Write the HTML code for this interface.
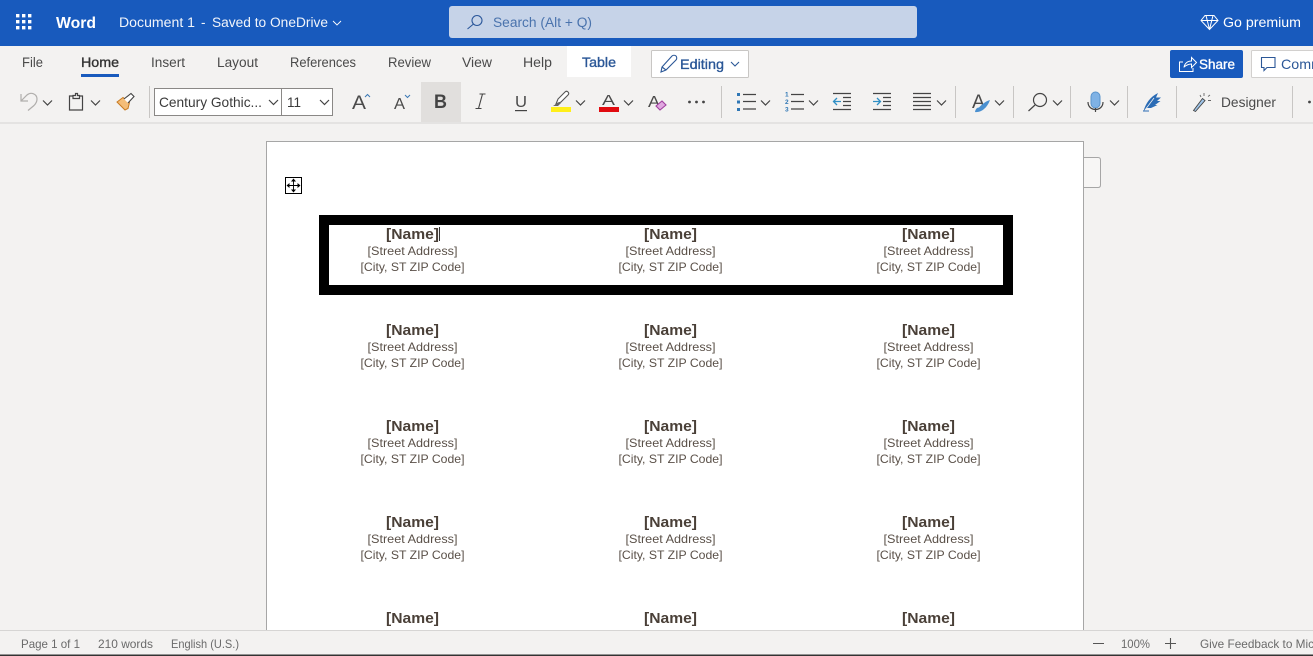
<!DOCTYPE html>
<html><head><meta charset="utf-8"><title>Word</title>
<style>
html,body{margin:0;padding:0;width:1313px;height:656px;overflow:hidden;background:#f3f2f1}
svg{display:block;font-family:"Liberation Sans",sans-serif}
.r{font-size:13.5px;fill:#4a4a4a}
.ch{fill:none;stroke:#444;stroke-width:1.2}
.ic{fill:none;stroke:#444;stroke-width:1.2}
.n{font-size:14.5px;font-weight:bold;fill:#4a4038;text-anchor:middle}
.s{font-size:12px;fill:#5a5048;text-anchor:middle}
.st{font-size:12px;fill:#6a6a6a}
.sb{stroke-width:.35px}
</style></head><body>
<svg width="1313" height="656" viewBox="0 0 1313 656" xmlns="http://www.w3.org/2000/svg">
<defs>
<path id="cv" d="M0 .5l4.500 4.500 4.500-4.500" class="ch"/>
<g id="lab">
<text class="n" x="0" y="0" textLength="53" lengthAdjust="spacingAndGlyphs">[Name]</text>
<text class="s" x="0" y="16" textLength="90" lengthAdjust="spacingAndGlyphs">[Street Address]</text>
<text class="s" x="0" y="32" textLength="104" lengthAdjust="spacingAndGlyphs">[City, ST ZIP Code]</text>
</g>
<g id="row"><use href="#lab" x="412.500"/><use href="#lab" x="670.500"/><use href="#lab" x="928.500"/></g>
</defs>
<rect width="1313" height="656" fill="#f3f2f1"/>

<!-- title bar -->
<rect width="1313" height="46" fill="#185abd"/>
<g fill="#fff"><rect x="16" y="14" width="3.400" height="3.400"/><rect x="22" y="14" width="3.400" height="3.400"/><rect x="28" y="14" width="3.400" height="3.400"/><rect x="16" y="20" width="3.400" height="3.400"/><rect x="22" y="20" width="3.400" height="3.400"/><rect x="28" y="20" width="3.400" height="3.400"/><rect x="16" y="26" width="3.400" height="3.400"/><rect x="22" y="26" width="3.400" height="3.400"/><rect x="28" y="26" width="3.400" height="3.400"/></g>
<text x="56" y="28" font-size="15.500" font-weight="bold" fill="#fff" textLength="40" lengthAdjust="spacingAndGlyphs">Word</text>
<text x="119" y="27" font-size="13.500" fill="#f2f5fb" textLength="76" lengthAdjust="spacingAndGlyphs">Document 1</text>
<text x="201" y="27" font-size="13.500" fill="#f2f5fb">-</text>
<text x="212" y="27" font-size="13.500" fill="#f2f5fb" textLength="116" lengthAdjust="spacingAndGlyphs">Saved to OneDrive</text>
<path d="M333 21l4 4 4-4" fill="none" stroke="#fff" stroke-width=".9"/>
<rect x="449" y="6" width="468" height="32" rx="3" fill="#c6d3e8"/>
<circle cx="477" cy="20.500" r="5" fill="none" stroke="#2b579a" stroke-width="1.100"/><path d="M473.500 24L467.500 29" stroke="#2b579a" stroke-width="1.100"/>
<text x="493" y="27" font-size="13.500" fill="#4a73ad" textLength="99" lengthAdjust="spacingAndGlyphs">Search (Alt + Q)</text>
<path d="M1201 20.500l4-5h9l4 5-8.500 9zM1201 20.500h17M1206 15.500l3.500 14 3.500-14" fill="none" stroke="#fff" stroke-width="1"/>
<text x="1223" y="27" font-size="13.500" fill="#fff" textLength="78" lengthAdjust="spacingAndGlyphs">Go premium</text>

<!-- tabs -->
<text class="r" x="22" y="67" textLength="21" lengthAdjust="spacingAndGlyphs">File</text>
<text class="sb" x="81" y="67" font-size="13.500" fill="#333" stroke="#333" textLength="38" lengthAdjust="spacingAndGlyphs">Home</text>
<rect x="81" y="74" width="38" height="3" fill="#185abd"/>
<text class="r" x="151" y="67" textLength="34" lengthAdjust="spacingAndGlyphs">Insert</text>
<text class="r" x="217" y="67" textLength="41" lengthAdjust="spacingAndGlyphs">Layout</text>
<text class="r" x="290" y="67" textLength="66" lengthAdjust="spacingAndGlyphs">References</text>
<text class="r" x="388" y="67" textLength="43" lengthAdjust="spacingAndGlyphs">Review</text>
<text class="r" x="462" y="67" textLength="30" lengthAdjust="spacingAndGlyphs">View</text>
<text class="r" x="523" y="67" textLength="29" lengthAdjust="spacingAndGlyphs">Help</text>
<rect x="567" y="46" width="64" height="31" fill="#fff"/>
<text class="sb" x="582" y="67" font-size="13.500" fill="#2b5797" stroke="#2b5797" textLength="34" lengthAdjust="spacingAndGlyphs">Table</text>
<rect x="651.500" y="50.500" width="97" height="27" rx="1" fill="#fff" stroke="#c8c6c4"/>
<path d="M661 72l1-5 10-11c1-1 3-1 4 0s1 3 0 4l-10 10zM662 67l4 3" fill="none" stroke="#2b5797" stroke-width="1.100"/>
<text class="sb" x="680" y="69" font-size="14" fill="#2b5797" stroke="#2b5797" textLength="44" lengthAdjust="spacingAndGlyphs">Editing</text>
<path d="M731 62l4 4 4-4" fill="none" stroke="#2b5797" stroke-width="1.100"/>
<rect x="1170" y="50" width="73" height="28" rx="2" fill="#185abd"/>
<path d="M1183 62h-3.500v9.500h13.500v-3.500M1184 67.500c.5-4 3.500-6.500 7.500-6.500v-3.500l5 5-5 5v-3.500c-3 0-5 1-7.500 3" fill="none" stroke="#fff" stroke-width="1"/>
<text class="sb" x="1199" y="69" font-size="14" fill="#fff" stroke="#fff" textLength="36" lengthAdjust="spacingAndGlyphs">Share</text>
<rect x="1251.500" y="50.500" width="70" height="27" rx="1" fill="#fff" stroke="#d2d0ce"/>
<path d="M1261.500 57.500h13.500v10h-8l-3 3v-3h-2.500z" fill="none" stroke="#2b5797" stroke-width="1.100"/>
<text x="1281" y="69" font-size="14" fill="#2b5797" textLength="42" lengthAdjust="spacingAndGlyphs">Comm</text>

<!-- toolbar -->
<rect x="0" y="122" width="1313" height="2" fill="#e4e3e2"/>
<path d="M21 94v7h7M21 101l6-6c4-3.500 10-1 10 4 0 3-1.500 5-3 6.500l-6 5" fill="none" stroke="#b0aeac" stroke-width="1.200"/>
<use href="#cv" x="43" y="100"/>
<path d="M73 96h-3.500v14h13v-14h-3.500M73 98.500v-3h2.500v-2h2v2h2v3z" class="ic"/>
<use href="#cv" x="91" y="100"/>
<path d="M117 102l8 8 3-1.500 1.500-6-6.500-5z" fill="#f4bd78" stroke="#c87a20" stroke-width="1"/>
<path d="M124 99l7-5.500 3 3-6 6.500" fill="#fff" stroke="#444" stroke-width="1.100"/>
<line x1="149.500" y1="86" x2="149.500" y2="118" stroke="#c8c6c4"/>
<rect x="154.500" y="88.500" width="178" height="27" fill="#fff" stroke="#8a8886"/>
<line x1="281.500" y1="88" x2="281.500" y2="116" stroke="#8a8886"/>
<text x="159" y="107" font-size="14" fill="#3a3a3a" textLength="103" lengthAdjust="spacingAndGlyphs">Century Gothic...</text>
<use href="#cv" x="269" y="99.500"/>
<text x="287" y="107" font-size="14" fill="#3a3a3a" textLength="14" lengthAdjust="spacingAndGlyphs">11</text>
<use href="#cv" x="320" y="99.500"/>
<text x="352" y="109" font-size="19" fill="#4a4a4a" textLength="14" lengthAdjust="spacingAndGlyphs">A</text>
<path d="M365 97l2.500-2.500 2.500 2.500" fill="none" stroke="#3a78b5" stroke-width="1"/>
<text x="394" y="109" font-size="16" fill="#4a4a4a" textLength="11" lengthAdjust="spacingAndGlyphs">A</text>
<path d="M405 95l2.500 2.500 2.500-2.500" fill="none" stroke="#3a78b5" stroke-width="1"/>
<rect x="421" y="82" width="40" height="40" fill="#e1dfdd"/>
<text x="434" y="108" font-size="19" font-weight="bold" fill="#444" textLength="13" lengthAdjust="spacingAndGlyphs">B</text>
<path d="M478.500 108.500l4-14.500M475.500 108.500h6M479.500 94h6" fill="none" stroke="#444" stroke-width="1.100"/>
<text x="515" y="107" font-size="16" fill="#4a4a4a" textLength="12" lengthAdjust="spacingAndGlyphs">U</text>
<rect x="515" y="110" width="12" height="1.200" fill="#444"/>
<path d="M556 104l2-5 7-7c1-1 2-1 3 0s1 2 0 3l-7 7z" fill="#fff" stroke="#555" stroke-width="1.100"/>
<path d="M553 106l3-2 3-2 2 1-3 3z" fill="#666"/>
<rect x="551" y="107" width="20" height="5" fill="#ffef1a"/>
<use href="#cv" x="576" y="100"/>
<text x="602" y="105" font-size="15" fill="#4a4a4a" textLength="13" lengthAdjust="spacingAndGlyphs">A</text>
<rect x="599" y="107" width="20" height="5" fill="#e10b10"/>
<use href="#cv" x="624" y="100"/>
<text x="648" y="107" font-size="16" fill="#4a4a4a" textLength="12" lengthAdjust="spacingAndGlyphs">A</text>
<path d="M656 106l6-5 4 4-6 5z" fill="#e0a8e0" stroke="#a040a0" stroke-width="1.100"/>
<g fill="#444"><circle cx="689.500" cy="102" r="1.400"/><circle cx="696.500" cy="102" r="1.400"/><circle cx="703.500" cy="102" r="1.400"/></g>
<line x1="721.500" y1="86" x2="721.500" y2="118" stroke="#c8c6c4"/>
<g fill="#2f77b5"><rect x="737" y="93" width="3" height="3"/><rect x="737" y="100.500" width="3" height="3"/><rect x="737" y="108" width="3" height="3"/></g>
<path d="M743 94.500h13M743 101.500h13M743 109h13" class="ic"/>
<use href="#cv" x="761" y="100"/>
<text x="785" y="96.500" font-size="6.500" font-weight="bold" fill="#2f77b5">1</text><text x="785" y="104" font-size="6.500" font-weight="bold" fill="#2f77b5">2</text><text x="785" y="111.500" font-size="6.500" font-weight="bold" fill="#2f77b5">3</text>
<path d="M791 94.500h13M791 101.500h13M791 109h13" class="ic"/>
<use href="#cv" x="809" y="100"/>
<path d="M833 93.500h18M843 97.500h8M843 101.500h8M843 105.500h8M833 109.500h18" class="ic"/>
<path d="M841 101.500h-7.500M837 98l-3.500 3.500 3.500 3.500" fill="none" stroke="#2f8fc5" stroke-width="1.300"/>
<path d="M873 93.500h18M883 97.500h8M883 101.500h8M883 105.500h8M873 109.500h18" class="ic"/>
<path d="M873 101.500h7.500M877 98l3.500 3.500-3.500 3.500" fill="none" stroke="#2f8fc5" stroke-width="1.300"/>
<path d="M913 93.500h18M913 97.500h18M913 101.500h18M913 105.500h18M913 109.500h18" class="ic"/>
<use href="#cv" x="937" y="100"/>
<line x1="955.500" y1="86" x2="955.500" y2="118" stroke="#c8c6c4"/>
<text x="972" y="108" font-size="19" fill="#4a4a4a" textLength="13" lengthAdjust="spacingAndGlyphs">A</text>
<path d="M975 112c.5-3 2-4.500 4-4.500 3-3 6-6 11-7.500-1.500 4-3.500 7-6 9-2 2-6 3.500-9 3z" fill="#4a90d0"/>
<use href="#cv" x="995" y="100"/>
<line x1="1013.500" y1="86" x2="1013.500" y2="118" stroke="#c8c6c4"/>
<circle cx="1040" cy="100" r="6.500" class="ic"/><path d="M1035 105l-6.500 6" class="ic"/>
<use href="#cv" x="1053" y="100"/>
<line x1="1070.500" y1="86" x2="1070.500" y2="118" stroke="#c8c6c4"/>
<rect x="1091" y="92" width="9" height="16" rx="4.500" fill="#7fb2e5" stroke="#5a94cc"/>
<path d="M1088 102c0 10 15 10 15 0M1095.500 108v4" class="ic"/>
<use href="#cv" x="1110" y="100"/>
<line x1="1127.500" y1="86" x2="1127.500" y2="118" stroke="#c8c6c4"/>
<path d="M1143.500 111C1146 103 1150 97 1158 93L1156 97.500H1161L1157 101H1160.500L1155 105H1157.500L1151 108H1147z" fill="#2b6cb5"/>
<path d="M1145 110l9-12" stroke="#f3f2f1" stroke-width=".8" fill="none"/>
<path d="M1143 111h6" stroke="#2b6cb5" stroke-width="1" fill="none"/>
<line x1="1176.500" y1="86" x2="1176.500" y2="118" stroke="#c8c6c4"/>
<path d="M1193.500 110.500l9-12 2.500 2-9.500 11z" fill="#9fc4e8" stroke="#444" stroke-width=".9"/>
<path d="M1204 93v3M1208 96.500l2-1.500M1208 100.500h3M1200 95l1 2" stroke="#666" stroke-width=".9"/>
<text class="r" x="1221" y="107" font-size="14" textLength="55" lengthAdjust="spacingAndGlyphs">Designer</text>
<line x1="1292.500" y1="86" x2="1292.500" y2="118" stroke="#c8c6c4"/>
<circle cx="1309.500" cy="102" r="1.400" fill="#444"/>

<!-- page -->
<path d="M1083 157.500h15c1.500 0 2.500 1 2.500 2.500v25c0 1.500-1 2.500-2.500 2.500h-15z" fill="#f7f6f5" stroke="#a6a6a6"/>
<rect x="266.500" y="141.500" width="817" height="500" fill="#fff" stroke="#a6a6a6"/>
<rect x="285.500" y="177.500" width="16" height="16" fill="#fff" stroke="#000"/>
<path d="M293.500 179.500v12M287.500 185.500h12" stroke="#000" stroke-width=".9"/>
<path d="M293.500 178.500l-2.500 3h5zM293.500 192.500l-2.500-3h5zM286.500 185.500l3-2.500v5zM300.500 185.500l-3-2.500v5z" fill="#000"/>
<rect x="324" y="220" width="684" height="70" fill="#fff" stroke="#000" stroke-width="10"/>
<use href="#row" y="239"/>
<use href="#row" y="335"/>
<use href="#row" y="431"/>
<use href="#row" y="527"/>
<use href="#row" y="623"/>
<rect x="439" y="227" width="1" height="14" fill="#333"/>

<!-- status bar -->
<rect x="0" y="630" width="1313" height="26" fill="#f3f2f1"/>
<rect x="0" y="630" width="1313" height="1" fill="#d6d5d4"/>
<text class="st" x="21" y="648" textLength="59" lengthAdjust="spacingAndGlyphs">Page 1 of 1</text>
<text class="st" x="98" y="648" textLength="55" lengthAdjust="spacingAndGlyphs">210 words</text>
<text class="st" x="171" y="648" textLength="68" lengthAdjust="spacingAndGlyphs">English (U.S.)</text>
<path d="M1093 643.500h11M1165 643.500h11M1170.500 638v11" stroke="#555" stroke-width="1.100"/>
<text class="st" x="1121" y="648" textLength="29" lengthAdjust="spacingAndGlyphs">100%</text>
<text class="st" x="1200" y="648" textLength="114" lengthAdjust="spacingAndGlyphs">Give Feedback to Mic</text>
<rect x="0" y="654.500" width="1313" height="1.500" fill="#333"/>
</svg>
</body></html>
